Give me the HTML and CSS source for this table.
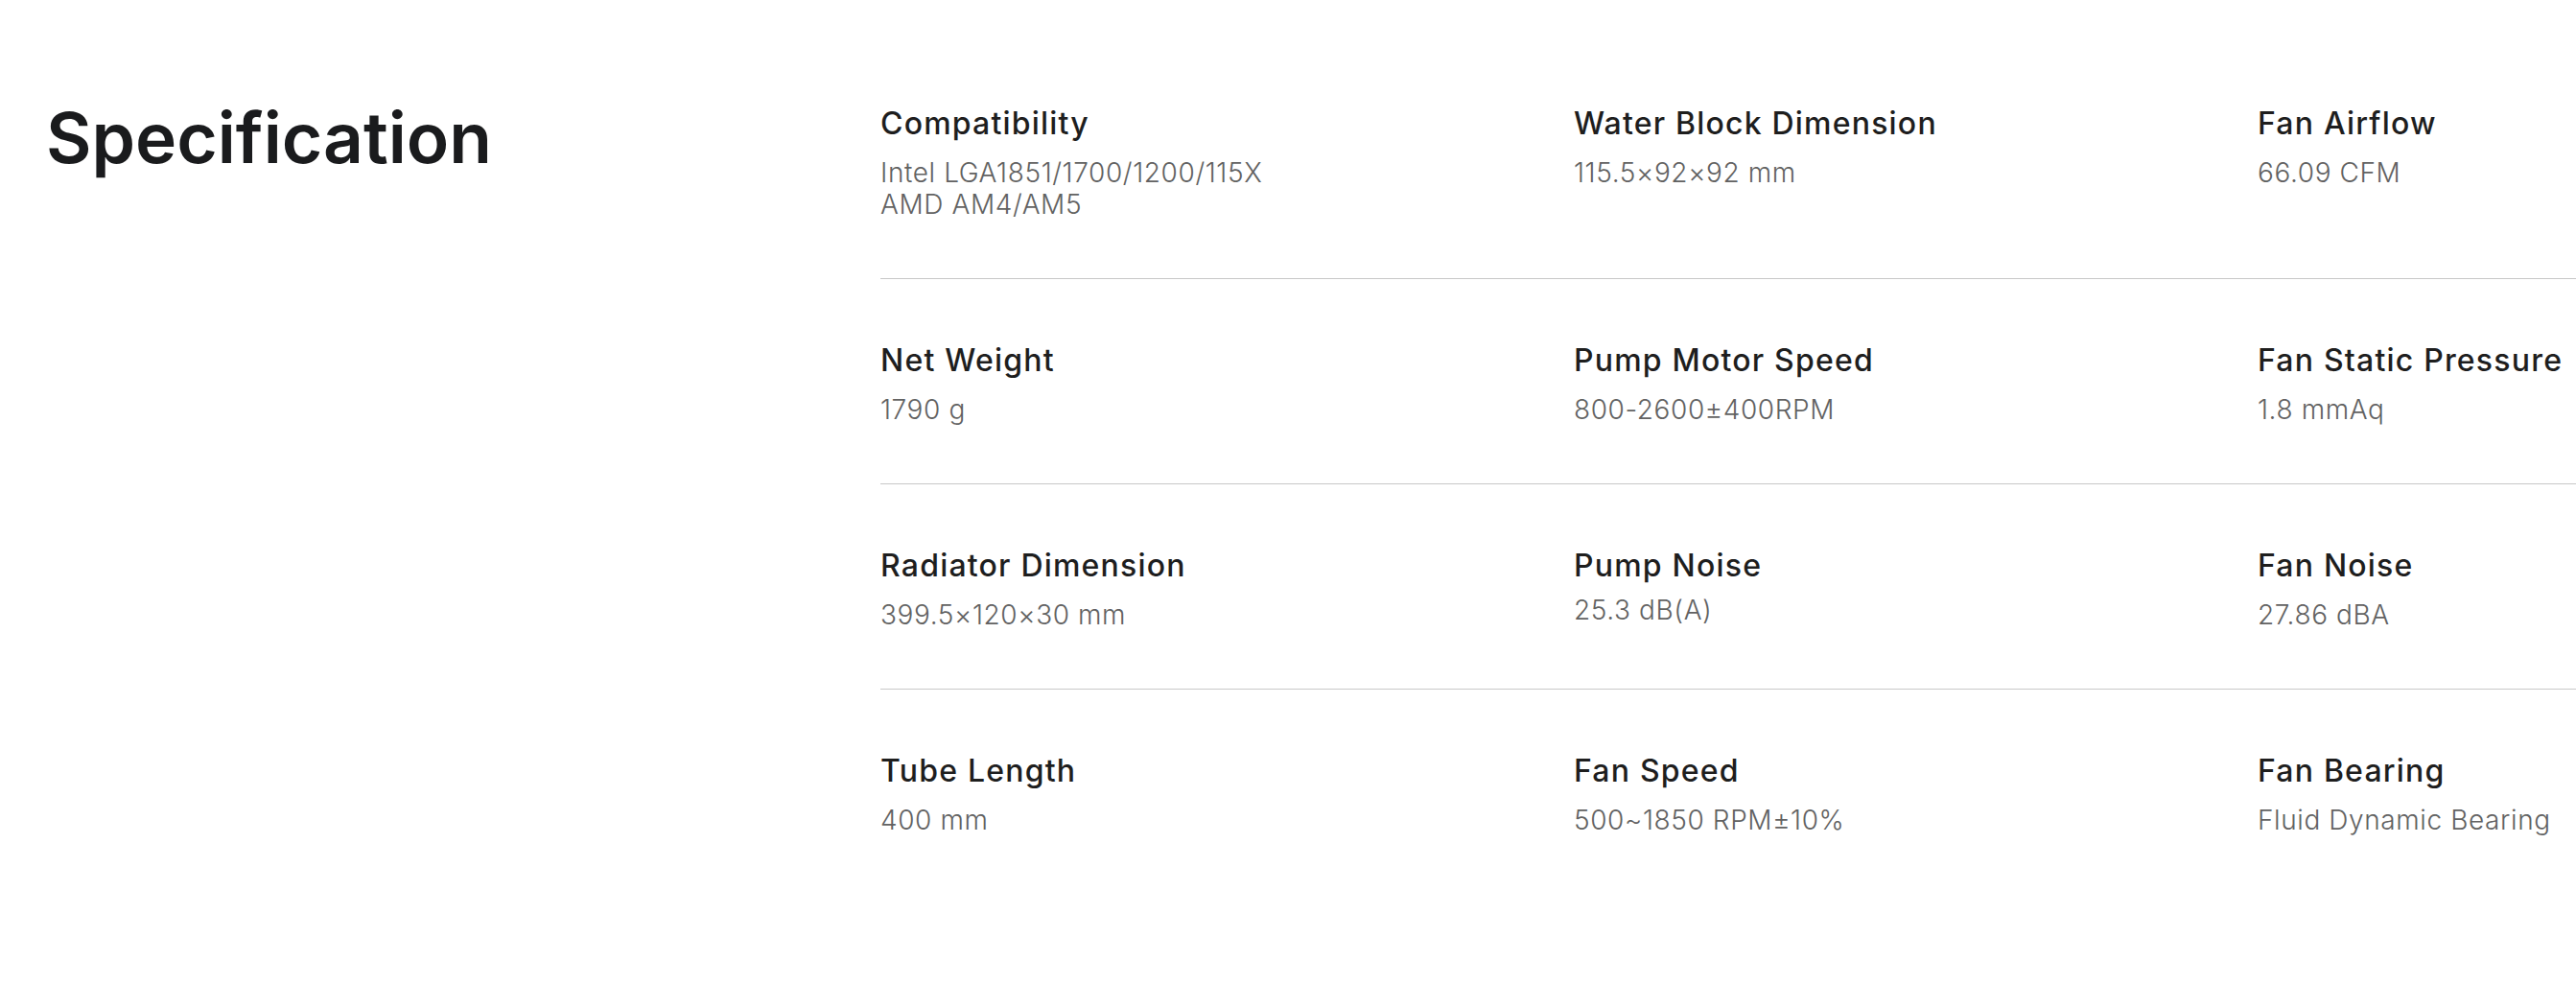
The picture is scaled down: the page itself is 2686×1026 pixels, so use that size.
FILE: index.html
```html
<!DOCTYPE html>
<html lang="en">
<head>
<meta charset="utf-8">
<title>Specification</title>
<link rel="stylesheet" href="styles.css">
</head>
<body>
<section class="spec">
  <h2 class="spec-title">Specification</h2>
  <div class="spec-table">
    <div class="spec-row">
      <div class="spec-item">
        <div class="spec-label">Compatibility</div>
        <div class="spec-value">Intel LGA1851/1700/1200/115X<br>AMD AM4/AM5</div>
      </div>
      <div class="spec-item">
        <div class="spec-label">Water Block Dimension</div>
        <div class="spec-value">115.5×92×92 mm</div>
      </div>
      <div class="spec-item">
        <div class="spec-label">Fan Airflow</div>
        <div class="spec-value">66.09 CFM</div>
      </div>
    </div>
    <div class="spec-row">
      <div class="spec-item">
        <div class="spec-label">Net Weight</div>
        <div class="spec-value">1790 g</div>
      </div>
      <div class="spec-item">
        <div class="spec-label">Pump Motor Speed</div>
        <div class="spec-value">800-2600±400RPM</div>
      </div>
      <div class="spec-item">
        <div class="spec-label">Fan Static Pressure</div>
        <div class="spec-value">1.8 mmAq</div>
      </div>
    </div>
    <div class="spec-row">
      <div class="spec-item">
        <div class="spec-label">Radiator Dimension</div>
        <div class="spec-value">399.5×120×30 mm</div>
      </div>
      <div class="spec-item">
        <div class="spec-label">Pump Noise</div>
        <div class="spec-value spec-value-tight">25.3 dB(A)</div>
      </div>
      <div class="spec-item">
        <div class="spec-label">Fan Noise</div>
        <div class="spec-value">27.86 dBA</div>
      </div>
    </div>
    <div class="spec-row">
      <div class="spec-item">
        <div class="spec-label">Tube Length</div>
        <div class="spec-value">400 mm</div>
      </div>
      <div class="spec-item">
        <div class="spec-label">Fan Speed</div>
        <div class="spec-value">500~1850 RPM±10%</div>
      </div>
      <div class="spec-item">
        <div class="spec-label">Fan Bearing</div>
        <div class="spec-value">Fluid Dynamic Bearing</div>
      </div>
    </div>
  </div>
</section>
</body>
</html>
```

FILE: styles.css
```css
html, body {
  margin: 0;
  padding: 0;
  background: #ffffff;
}

body {
  font-family: "Inter", "Liberation Sans", sans-serif;
  color: #1c1c1c;
  overflow: hidden;
}

.spec {
  display: flex;
  align-items: flex-start;
  padding-left: 48px;
}

.spec-title {
  flex: 0 0 870px;
  margin: 99px 0 0;
  font-size: 73px;
  line-height: 90px;
  font-weight: 600;
  color: #1a1b1d;
  letter-spacing: 0;
}

.spec-table {
  flex: 1 1 auto;
  padding-top: 44px;
}

.spec-row {
  display: grid;
  grid-template-columns: 723px 713px 1fr;
  padding: 66px 0 60px;
  border-bottom: 1px solid #c8c8c8;
}

.spec-row:last-child {
  border-bottom: none;
}

.spec-label {
  font-size: 32px;
  line-height: 38px;
  font-weight: 500;
  color: #1e1e1e;
  letter-spacing: 1.2px;
  white-space: nowrap;
}

.spec-value {
  margin-top: 16px;
  font-size: 28px;
  line-height: 33px;
  font-weight: 300;
  color: #626262;
  letter-spacing: 0.6px;
  white-space: nowrap;
}

.spec-value-tight {
  margin-top: 11px;
}
```
